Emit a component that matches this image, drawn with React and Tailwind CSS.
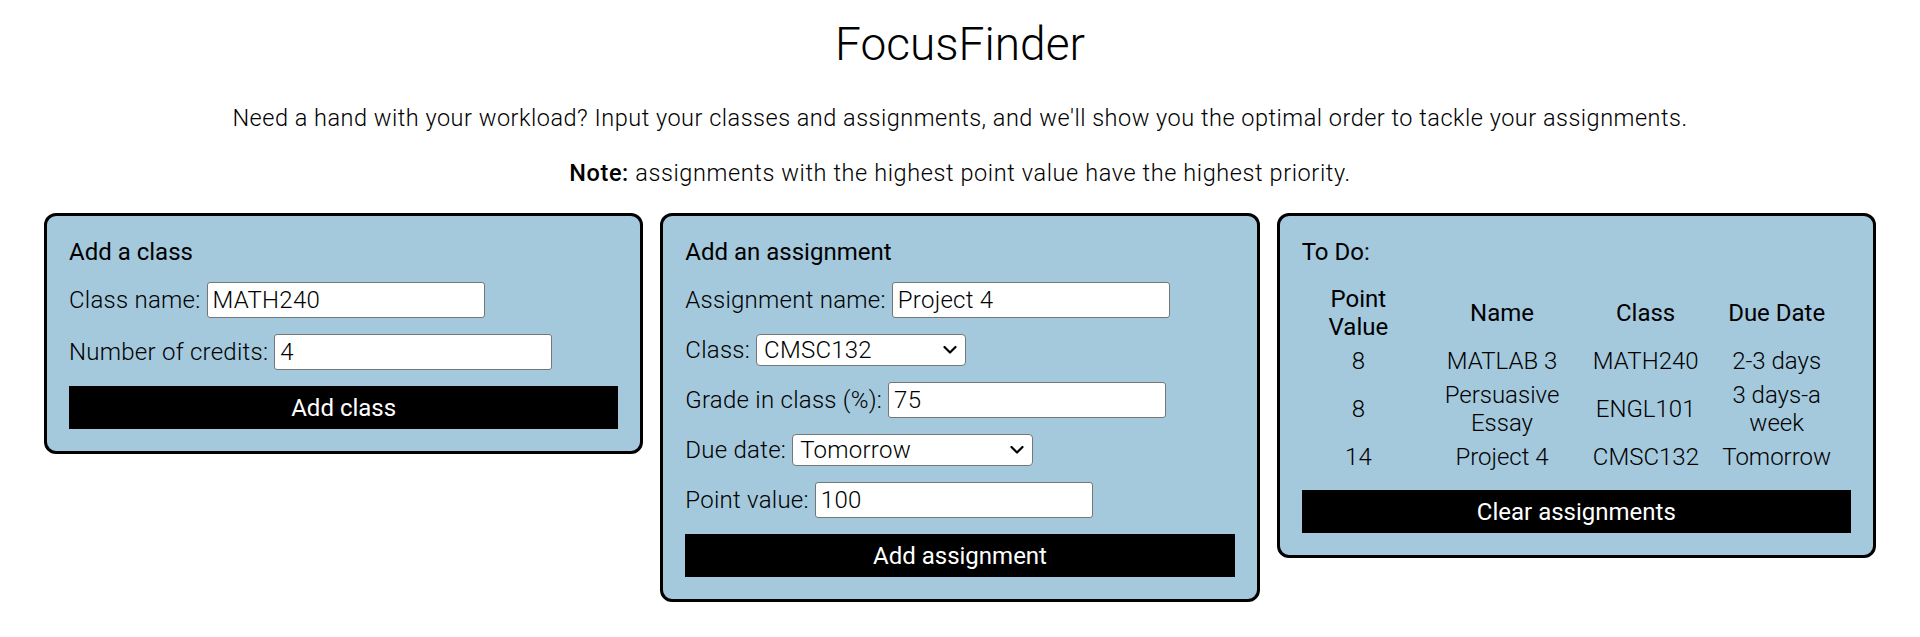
import React from "react";

function Chevron() {
  return (
    <svg className="pointer-events-none absolute right-[9px] top-1/2 -translate-y-1/2" width="14" height="9" viewBox="0 0 14 9" fill="none">
      <path d="M1.5 1.5 L7 7 L12.5 1.5" stroke="#000" strokeWidth="2.2" strokeLinecap="round" strokeLinejoin="round" />
    </svg>
  );
}

function Field({ label, value, width = "w-[278px]" }) {
  return (
    <div className="flex items-center gap-[6px]">
      <label className="font-light tracking-[0.25px]">{label}</label>
      <input
        readOnly
        value={value}
        className={`h-[36px] ${width} rounded-[3px] border border-[#767676] bg-white px-[5px] font-light tracking-[0.25px] text-black outline-none`}
      />
    </div>
  );
}

function SelectField({ label, value, options, width }) {
  return (
    <div className="flex items-center gap-[6px]">
      <label className="font-light tracking-[0.25px]">{label}</label>
      <div className={`relative ${width}`}>
        <select
          value={value}
          onChange={() => {}}
          className="h-[32px] w-full appearance-none rounded-[4px] border border-[#767676] bg-white pl-[7px] font-light tracking-[0.25px] text-black outline-none"
        >
          {options.map((o) => (
            <option key={o}>{o}</option>
          ))}
        </select>
        <Chevron />
      </div>
    </div>
  );
}

function Button({ children }) {
  return (
    <button className="h-[43px] w-full bg-black text-white font-normal">{children}</button>
  );
}

const rows = [
  ["8", "MATLAB 3", "MATH240", "2-3 days"],
  ["8", "Persuasive Essay", "ENGL101", "3 days-a week"],
  ["14", "Project 4", "CMSC132", "Tomorrow"],
];

export default function App() {
  return (
    <div className="min-h-screen bg-white text-black font-['Roboto','Liberation_Sans',sans-serif] text-[24px] leading-[28px]">
      <h1 className="pt-[18px] text-center text-[46px] leading-[53px] font-light">FocusFinder</h1>
      <p className="mt-[34px] text-center text-[23.5px] leading-[26px] font-light tracking-[0.5px]">
        Need a hand with your workload? Input your classes and assignments, and we'll show you the optimal order to tackle your assignments.
      </p>
      <p className="mt-[29px] text-center text-[23.5px] leading-[26px] font-light tracking-[0.6px]">
        <span className="font-medium">Note:</span> assignments with the highest point value have the highest priority.
      </p>

      <div className="mt-[27px] flex items-start gap-[17px] px-[44px]">
        {/* Add a class */}
        <div className="flex flex-1 flex-col gap-4 rounded-[12px] border-[3px] border-black bg-[#a4c8dc] p-[22px]">
          <div>Add a class</div>
          <Field label="Class name:" value="MATH240" />
          <Field label="Number of credits:" value="4" />
          <Button>Add class</Button>
        </div>

        {/* Add an assignment */}
        <div className="flex flex-1 flex-col gap-4 rounded-[12px] border-[3px] border-black bg-[#a4c8dc] p-[22px]">
          <div>Add an assignment</div>
          <Field label="Assignment name:" value="Project 4" />
          <SelectField label="Class:" value="CMSC132" options={["CMSC132", "MATH240", "ENGL101"]} width="w-[210px]" />
          <Field label="Grade in class (%):" value="75" />
          <SelectField label="Due date:" value="Tomorrow" options={["Tomorrow", "2-3 days", "3 days-a week"]} width="w-[241px]" />
          <Field label="Point value:" value="100" />
          <Button>Add assignment</Button>
        </div>

        {/* To Do */}
        <div className="flex flex-1 flex-col gap-4 rounded-[12px] border-[3px] border-black bg-[#a4c8dc] p-[22px]">
          <div>To Do:</div>
          <table className="w-full table-fixed border-collapse text-center">
            <colgroup>
              <col className="w-[113px]" />
              <col className="w-[173px]" />
              <col className="w-[113px]" />
              <col className="w-[148px]" />
            </colgroup>
            <thead>
              <tr>
                <th className="py-[3px] px-[8px] font-normal">Point Value</th>
                <th className="py-[3px] font-normal">Name</th>
                <th className="py-[3px] font-normal">Class</th>
                <th className="py-[3px] font-normal">Due Date</th>
              </tr>
            </thead>
            <tbody>
              {rows.map((r, i) => (
                <tr key={i}>
                  {r.map((c, j) => (
                    <td key={j} className="py-[3px] px-[4px] font-light">{c}</td>
                  ))}
                </tr>
              ))}
            </tbody>
          </table>
          <Button>Clear assignments</Button>
        </div>
      </div>
    </div>
  );
}
